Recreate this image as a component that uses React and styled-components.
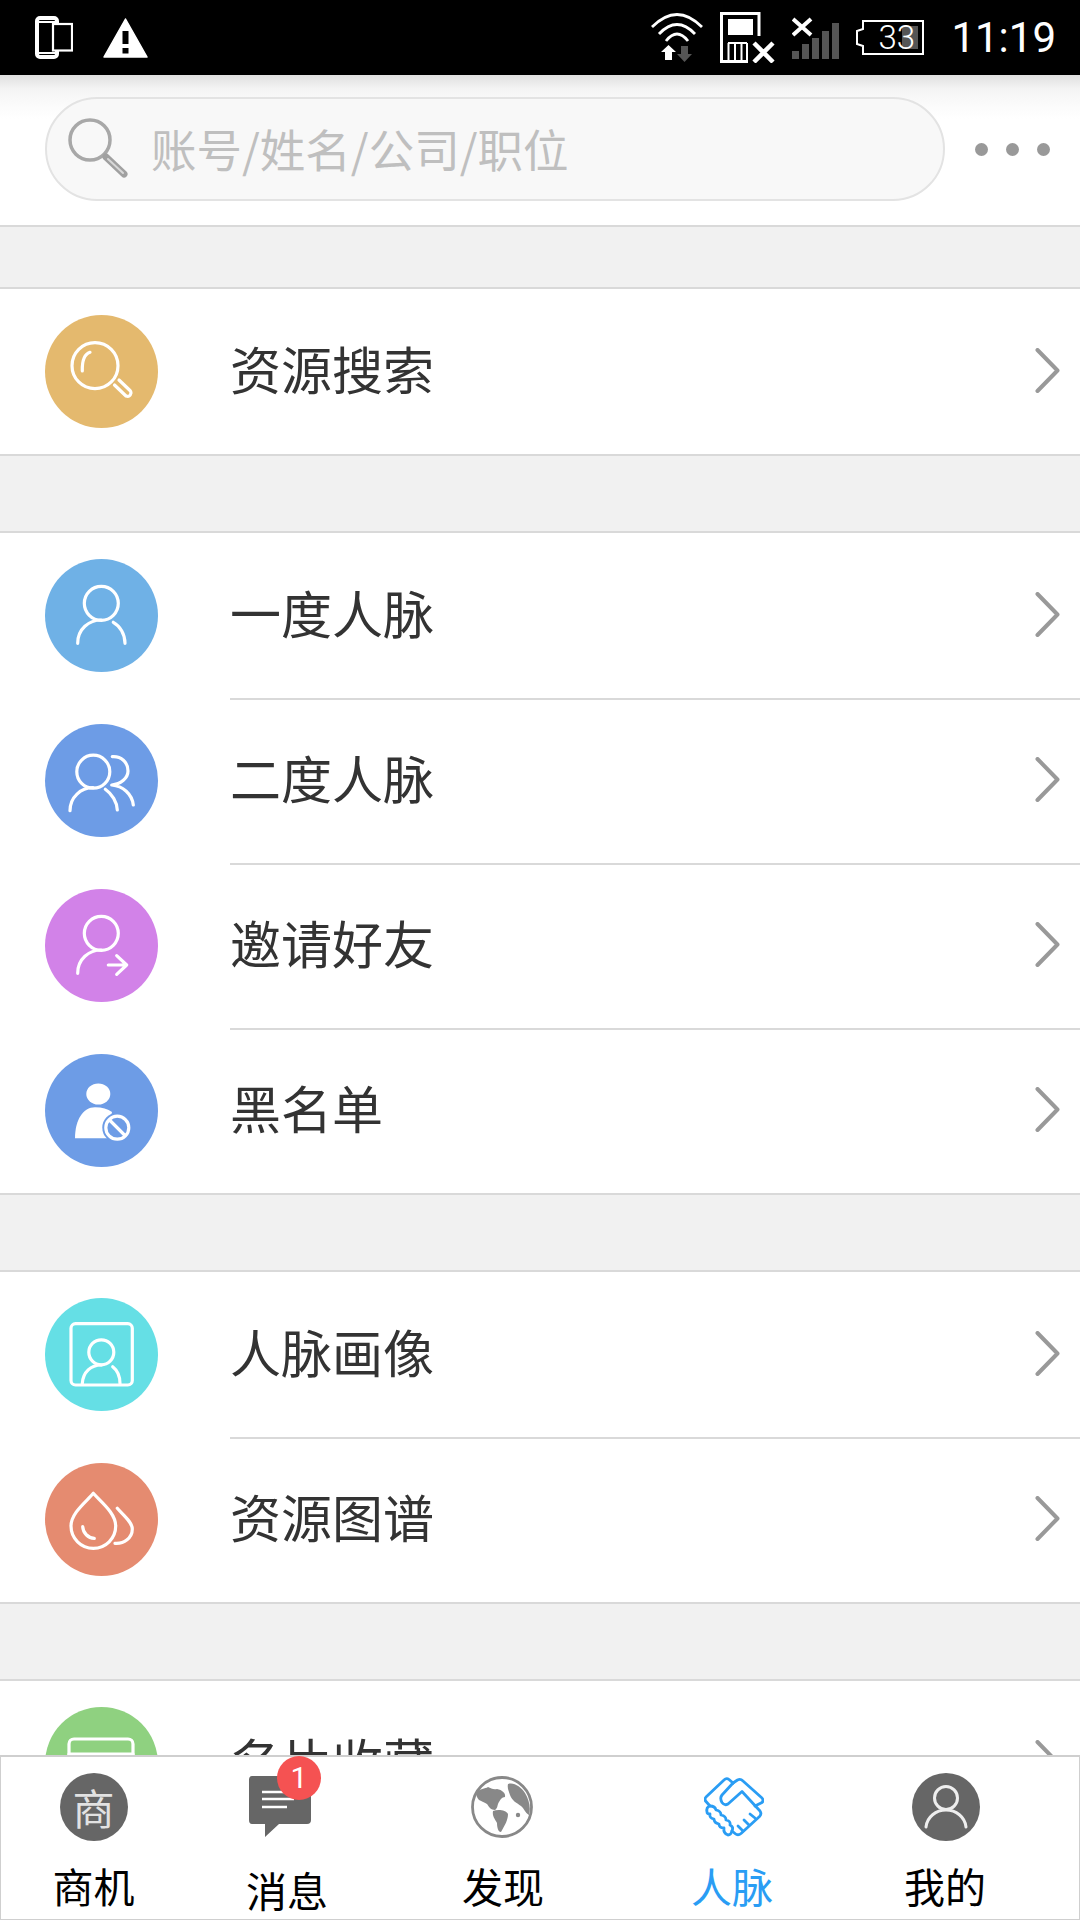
import React from "react";
import styled, { createGlobalStyle } from "styled-components";

const Global = createGlobalStyle`
  html, body { margin: 0; padding: 0; background: #fff; }
  #root { width: 1080px; height: 1920px; }
  * { box-sizing: border-box; }
`;

const CJK = `"Noto Sans CJK SC", "Noto Sans", sans-serif`;

const Page = styled.div`
  width: 1080px;
  height: 1920px;
  display: flex;
  flex-direction: column;
  overflow: hidden;
  background: #f1f1f1;
  font-family: ${CJK};
`;

const StatusBar = styled.div`
  height: 75px;
  flex: none;
  background: #000;
  display: flex;
  align-items: center;
  justify-content: space-between;
  padding: 0 24px 0 35px;
`;

const StatusGroup = styled.div`
  display: flex;
  align-items: center;
  gap: ${(p) => p.$gap}px;
`;

const Battery = styled.div`
  position: relative;
  width: 68px;
  height: 35px;
  margin-right: 10px;
`;

const BatteryText = styled.span`
  position: absolute;
  left: 22px;
  top: -1px;
  font: 300 33px/37px Roboto, sans-serif;
  color: #fff;
`;

const Clock = styled.span`
  font: 400 42px/48px Roboto, sans-serif;
  color: #fff;
`;

const Header = styled.div`
  height: 152px;
  flex: none;
  display: flex;
  align-items: center;
  padding: 0 21px 2px 45px;
  background: linear-gradient(#e0e0e0 0, #f4f4f4 14px, #fbfbfb 30px, #fff 44px);
  border-bottom: 2px solid #d9d9d9;
`;

const SearchBox = styled.div`
  width: 900px;
  height: 104px;
  display: flex;
  align-items: center;
  gap: 21px;
  padding-left: 21px;
  border: 2px solid #e3e3e3;
  border-radius: 52px;
  background: #f8f8f8;
`;

const Placeholder = styled.span`
  font-size: 45.5px;
  line-height: 60px;
  color: #bfbfbf;
  margin-bottom: 3px;
`;

const More = styled.div`
  display: flex;
  gap: 18px;
  margin-left: 30px;
`;

const Dot = styled.i`
  width: 13px;
  height: 13px;
  border-radius: 50%;
  background: #999;
`;

const Scroll = styled.div`
  flex: 1;
  min-height: 0;
  overflow: hidden;
`;

const Group = styled.div`
  margin-top: ${(p) => p.$top}px;
  background: #fff;
  border-top: 2px solid #d9d9d9;
  border-bottom: 2px solid #d9d9d9;
`;

const Row = styled.div`
  height: 165px;
  display: flex;
  align-items: center;
`;

const Badge = styled.div`
  width: 113px;
  height: 113px;
  flex: none;
  margin: 0 72px 0 45px;
  border-radius: 50%;
  background: ${(p) => p.$color};
`;

const RowBody = styled.div`
  flex: 1;
  height: 100%;
  display: flex;
  align-items: center;
  justify-content: space-between;
  padding-right: 20px;
  border-top: 2px solid ${(p) => (p.$first ? "transparent" : "#d9d9d9")};
`;

const RowLabel = styled.span`
  font-size: 51px;
  line-height: 70px;
  color: #333;
  margin-bottom: 10px;
`;

const ChevronBox = styled.div`
  display: flex;
  margin-bottom: 5px;
`;

const Nav = styled.nav`
  height: 165px;
  flex: none;
  display: grid;
  grid-template-columns: 185px 202px 230px 228px 198px;
  background: #fff;
  border: 1px solid #cfcfcf;
  border-width: 2px 1px 1px;
`;

const Tab = styled.div`
  position: relative;
  display: flex;
  flex-direction: column;
  align-items: center;
  padding-top: 16px;
`;

const TabIcon = styled.div`
  position: relative;
  height: 68px;
  width: 68px;
  display: flex;
  align-items: center;
  justify-content: center;
  left: ${(p) => p.$shift || 0}px;
`;

const TabLabel = styled.span`
  margin-top: ${(p) => p.$drop + 19}px;
  font-size: 41px;
  line-height: 50px;
  color: ${(p) => (p.$active ? "#2a9df4" : "#000")};
`;

const RoundIcon = styled.div`
  width: 68px;
  height: 68px;
  border-radius: 50%;
  background: #666;
  color: #e2e2e2;
  display: flex;
  align-items: center;
  justify-content: center;
  font-size: 42px;
  line-height: 1;
`;

const Count = styled.span`
  position: absolute;
  top: -17px;
  left: 31px;
  width: 44px;
  height: 44px;
  border-radius: 50%;
  background: #f55252;
  color: #fff;
  font: 400 30px/44px Roboto, sans-serif;
  text-align: center;
`;

const line = { fill: "none", stroke: "#fff", strokeWidth: 3.2, strokeLinecap: "round", strokeLinejoin: "round" };

const Glyph = ({ children }) => (
  <svg width="113" height="113" viewBox="0 0 113 113" {...line}>
    {children}
  </svg>
);

const Chevron = () => (
  <ChevronBox>
    <svg width="25" height="45" viewBox="0 0 25 45">
      <path d="M2.5 2 L22.5 22.5 L2.5 43" fill="none" stroke="#999" strokeWidth="4" strokeLinecap="round" strokeLinejoin="round" />
    </svg>
  </ChevronBox>
);

const icons = {
  search: (
    <Glyph>
      <circle cx="50" cy="50.7" r="23" />
      <path d="M45 37.3 C40 39 37 46 37.3 56" />
      <path d="M69.5 70 L81 81 Q85 82.5 86 78 Q86 76.5 85 75.5 L74 65" />
    </Glyph>
  ),
  person: (
    <Glyph>
      <circle cx="56.3" cy="44.3" r="17" />
      <path d="M32.7 84.3 C32.7 70 44 61 56.3 61" />
      <path d="M68.3 63.3 C75 67 80 75 80 84.3" />
    </Glyph>
  ),
  people: (
    <Glyph>
      <circle cx="48.3" cy="47.7" r="16.5" />
      <path d="M25 86.7 C25 73 36 63.7 48 63.7" />
      <path d="M60.3 65.3 C67 70 72 78 72.3 86" />
      <path d="M67.3 32.7 C76 32 83 38 83 47 C83 54 76 60 66.7 61 C78 62 87 70 88.3 81" />
    </Glyph>
  ),
  invite: (
    <Glyph>
      <circle cx="56.3" cy="44.3" r="17" />
      <path d="M32.7 84.3 C32.7 70 44 61 56.3 61" />
      <path d="M63.3 76 H81.7 M71.7 66.7 L81.7 76 L71.7 85.3" />
    </Glyph>
  ),
  block: (
    <Glyph>
      <ellipse cx="53.3" cy="40" rx="12" ry="10.5" fill="#fff" stroke="none" />
      <path d="M30 84.3 C30 66 38 53.3 50 53.3 C57 53.3 63 55 67 58 L62 84.3 Z" fill="#fff" stroke="none" />
      <circle cx="72.3" cy="73.7" r="15" fill="#6d9ce6" stroke="none" />
      <circle cx="72.3" cy="73.7" r="11.5" />
      <path d="M65 66.5 L79.5 81" />
    </Glyph>
  ),
  portrait: (
    <Glyph>
      <rect x="26" y="25.7" width="61.3" height="61.3" rx="4.5" />
      <circle cx="56.3" cy="54.3" r="12.5" />
      <path d="M37.3 85.5 C38 74 46 67 56.3 67" />
      <path d="M67.7 68.7 C72 72 75 78 75 85.5" />
    </Glyph>
  ),
  drops: (
    <Glyph>
      <path d="M48.3 30.3 C41 39 26 50 26 63 A22.3 22.3 0 0 0 70.7 63 C70.7 50 56 39 48.3 30.3 Z" />
      <path d="M37.7 63.7 C38 70 43 75 49.3 75.3" />
      <path d="M72.3 45.3 C78 52 87.3 59 87.3 66 C87.3 75 79 81 70 80.3" />
    </Glyph>
  ),
  card: (
    <Glyph>
      <rect x="24" y="32" width="64" height="52" rx="5" />
      <path d="M24 47 H88" />
    </Glyph>
  ),
};

const groups = [
  { top: 60, rows: [{ label: "资源搜索", color: "#e4b96e", icon: "search" }] },
  {
    top: 75,
    rows: [
      { label: "一度人脉", color: "#6fb1e6", icon: "person" },
      { label: "二度人脉", color: "#6d9ce6", icon: "people" },
      { label: "邀请好友", color: "#d282e8", icon: "invite" },
      { label: "黑名单", color: "#6d9ce6", icon: "block" },
    ],
  },
  {
    top: 75,
    rows: [
      { label: "人脉画像", color: "#65dfe5", icon: "portrait" },
      { label: "资源图谱", color: "#e58b70", icon: "drops" },
    ],
  },
  { top: 75, rows: [{ label: "名片收藏", color: "#8fd180", icon: "card" }] },
];

const PhoneIcon = () => (
  <svg width="38" height="43" viewBox="0 0 38 43">
    <rect x="2" y="2" width="20" height="39" rx="3" fill="none" stroke="#fff" strokeWidth="4" />
    <path d="M2 6 H21 M2 37 H21" stroke="#fff" strokeWidth="2" />
    <rect x="18" y="8" width="19" height="26.5" fill="#000" stroke="#fff" strokeWidth="2.2" />
  </svg>
);

const WarnIcon = () => (
  <svg width="45" height="40" viewBox="0 0 45 40">
    <path d="M22.5 1 L44 39 H1 Z" fill="#fff" stroke="#fff" strokeWidth="1.5" strokeLinejoin="round" />
    <rect x="19.5" y="13" width="6" height="13" fill="#000" />
    <rect x="19.5" y="30" width="6" height="5.5" fill="#000" />
  </svg>
);

const WifiIcon = () => (
  <svg width="52" height="50" viewBox="0 0 52 50">
    <g fill="none" stroke="#fff" strokeWidth="2.8">
      <path d="M1 14 Q26 -11 51 14" />
      <path d="M8 21 Q26 2 44 21" />
      <path d="M15 28 Q26 14 37 28" />
    </g>
    <path d="M17.5 32 L25 39 H21 V47 H14 V39 H10 Z" fill="#fff" />
    <path d="M30 33 H37 V41 H41 L33.5 49 L26 41 H30 Z" fill="#555" />
  </svg>
);

const SimIcon = () => (
  <svg width="55" height="51" viewBox="0 0 55 51">
    <path d="M28 49.5 H1.5 V1.5 H39 V24" fill="none" stroke="#fff" strokeWidth="3" />
    <rect x="8" y="7" width="25" height="16" fill="#fff" />
    <path d="M8 31 H27 M8.5 31 V49 M15 31 V49 M21.5 31 V49 M27 31 V49" fill="none" stroke="#fff" strokeWidth="2" />
    <path d="M34 31 L53 50 M53 31 L34 50" stroke="#fff" strokeWidth="4.5" />
  </svg>
);

const SignalIcon = () => (
  <svg width="47" height="42" viewBox="0 0 47 42">
    <path d="M1 2 L19 18 M19 2 L1 18" stroke="#fff" strokeWidth="4" />
    {[34, 27, 21, 14, 6].map((y, i) => (
      <rect key={y} x={i * 10} y={y} width="7" height={42 - y} fill="#555" />
    ))}
  </svg>
);

const BatteryIcon = () => (
  <svg width="68" height="35" viewBox="0 0 68 35">
    <path d="M7 1 H67 V34 H7 V26 L1 24 V11 L7 9 Z" fill="none" stroke="#fff" strokeWidth="2" />
    <rect x="46" y="6" width="16" height="23" fill="#555" />
  </svg>
);

const SearchGlass = () => (
  <svg width="62" height="62" viewBox="0 0 62 62">
    <circle cx="22" cy="22" r="20" fill="none" stroke="#a8a8a8" strokeWidth="3.5" />
    <path d="M38 39 L56 56" stroke="#a0a0a0" strokeWidth="7" strokeLinecap="round" />
    <path d="M40 41 L55 55" stroke="#d8d8d8" strokeWidth="2" strokeLinecap="round" />
  </svg>
);

const MessageIcon = () => (
  <svg width="64" height="62" viewBox="0 0 64 62">
    <path d="M4 0 H60 Q63 0 63 4 V44 Q63 48 59 48 H31 L17 61 V48 H4 Q1 48 1 44 V4 Q1 0 4 0 Z" fill="#666" />
    <path d="M14 16 H46 M14 23 H46 M14 31 H39" stroke="#fff" strokeWidth="2.5" />
  </svg>
);

const GlobeIcon = () => (
  <svg width="62" height="62" viewBox="0 0 62 62">
    <circle cx="31" cy="31" r="29.5" fill="none" stroke="#888" strokeWidth="2.8" />
    <g fill="#888">
      <path d="M5 17 C9 12 14 13 17 11 C20 12 22 14 26 13 C31 14 35 17 34 21 C31 21 29 24 28 26 C26 29 27 32 24 34 C20 34 18 31 16 28 C13 26 10 25 8 24 C6 22 5 19 5 17 Z" />
      <path d="M37 8 C43 6 50 11 54 17 C58 24 60 31 58 39 C54 37 53 32 50 30 C46 27 41 25 39 19 C38 15 36 13 37 8 Z" />
      <path d="M22 35 C27 33 35 34 37 38 C37 44 34 49 30 56 C27 56 26 51 26 47 C24 43 21 40 22 35 Z" />
      <circle cx="47" cy="39" r="2.2" />
    </g>
  </svg>
);

const HandsIcon = () => (
  <svg width="60" height="60" viewBox="0 0 60 60" fill="none" stroke="#2a9df4" strokeWidth="2.8" strokeLinejoin="round" strokeLinecap="round">
    <path d="M29 6 L25 2.5 Q22.5 0.5 20 3 L2 20 Q0 22.5 2 24.5 L6 29" />
    <path d="M29 6 L18 18 Q15.5 21 18 25.5 Q20.5 29 24 27 L38 14.5 L56 34 Q58 37 55.5 39.5 L37 56.5 Q34 59 31 56.5 L28 54" />
    <path d="M29 6 L33.5 3 Q36.5 1.5 39 4 L58 21 Q60 23.5 58 25.5 L51 29" />
    <path d="M6 29 Q2 30 3 35 Q3 37 6 37 Q5 41 10 42 Q10 46 15 47 Q15 51 20 51 Q19 56 24 58 Q27 58 28 54 Q30 50 26 48 Q27 44 22 43 Q22 39 17 38 Q17 34 12 33 Q11 29 6 29 Z" />
    <path d="M46 37 L51 41 M40 43 L45 48 M34 49 L39 54" />
  </svg>
);

const FaceIcon = () => (
  <svg width="68" height="68" viewBox="0 0 68 68">
    <circle cx="34" cy="34" r="34" fill="#666" />
    <circle cx="34" cy="25" r="11.5" fill="none" stroke="#eee" strokeWidth="3" />
    <path d="M14 54 C15 44 24 37 34 37 C44 37 53 44 54 54" fill="none" stroke="#eee" strokeWidth="3" strokeLinecap="round" />
  </svg>
);

const App = () => (
  <Page>
    <Global />
    <StatusBar>
      <StatusGroup $gap={30}>
        <PhoneIcon />
        <WarnIcon />
      </StatusGroup>
      <StatusGroup $gap={17}>
        <WifiIcon />
        <SimIcon />
        <SignalIcon />
        <Battery>
          <BatteryIcon />
          <BatteryText>33</BatteryText>
        </Battery>
        <Clock>11:19</Clock>
      </StatusGroup>
    </StatusBar>
    <Header>
      <SearchBox>
        <SearchGlass />
        <Placeholder>账号/姓名/公司/职位</Placeholder>
      </SearchBox>
      <More>
        <Dot />
        <Dot />
        <Dot />
      </More>
    </Header>
    <Scroll>
      {groups.map((group) => (
        <Group key={group.rows[0].label} $top={group.top}>
          {group.rows.map((row, i) => (
            <Row key={row.label}>
              <Badge $color={row.color}>{icons[row.icon]}</Badge>
              <RowBody $first={i === 0}>
                <RowLabel>{row.label}</RowLabel>
                <Chevron />
              </RowBody>
            </Row>
          ))}
        </Group>
      ))}
    </Scroll>
    <Nav>
      <Tab>
        <TabIcon>
          <RoundIcon>商</RoundIcon>
        </TabIcon>
        <TabLabel $drop={0}>商机</TabLabel>
      </Tab>
      <Tab>
        <TabIcon $shift={-7}>
          <MessageIcon />
          <Count>1</Count>
        </TabIcon>
        <TabLabel $drop={4}>消息</TabLabel>
      </Tab>
      <Tab>
        <TabIcon $shift={-1}>
          <GlobeIcon />
        </TabIcon>
        <TabLabel $drop={0}>发现</TabLabel>
      </Tab>
      <Tab>
        <TabIcon $shift={2}>
          <HandsIcon />
        </TabIcon>
        <TabLabel $drop={0} $active>
          人脉
        </TabLabel>
      </Tab>
      <Tab>
        <TabIcon $shift={1}>
          <FaceIcon />
        </TabIcon>
        <TabLabel $drop={0}>我的</TabLabel>
      </Tab>
    </Nav>
  </Page>
);

export default App;
